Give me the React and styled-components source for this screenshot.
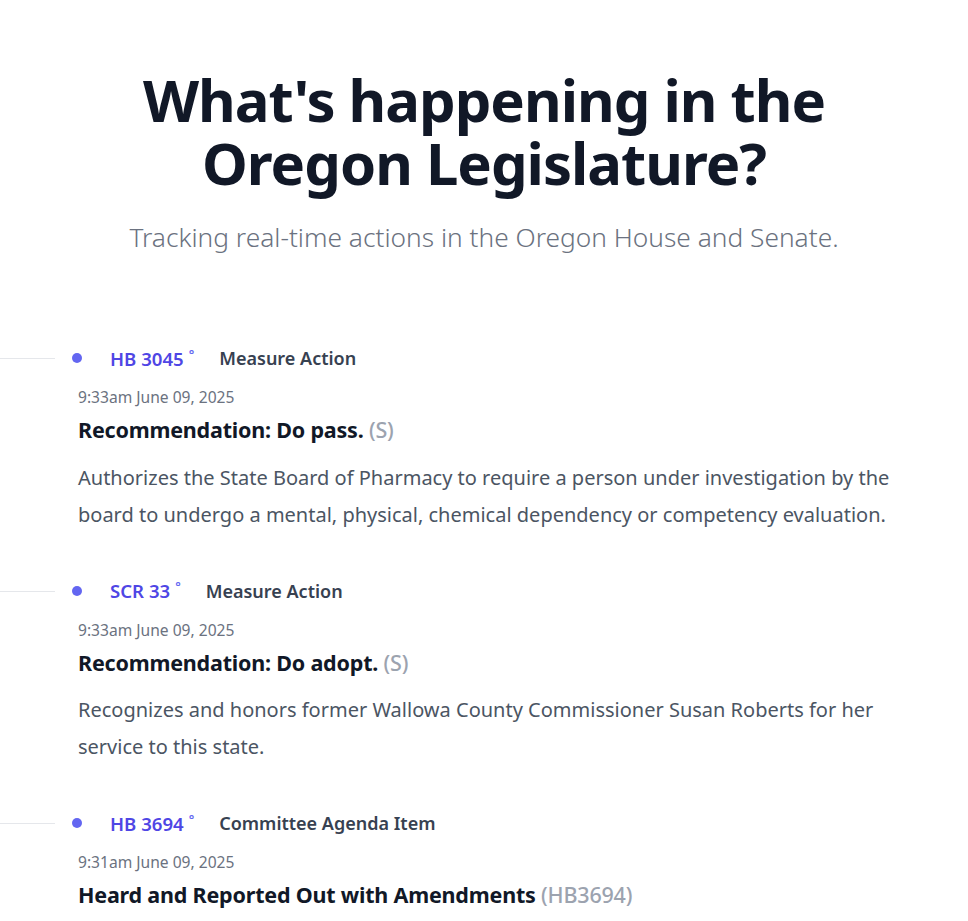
import React from "react";
import styled, { createGlobalStyle } from "styled-components";

const Global = createGlobalStyle`
  html, body { margin: 0; padding: 0; background: #ffffff; }
  body { font-family: "Noto Sans", "Open Sans", sans-serif; -webkit-font-smoothing: antialiased; }
  * { box-sizing: border-box; }
`;

const Page = styled.main`
  width: 968px;
  overflow: hidden;
`;

const Hero = styled.header`
  display: flex;
  flex-direction: column;
  align-items: center;
  padding-top: 68px;
  text-align: center;
`;

const Title = styled.h1`
  margin: 0;
  font-size: 58px;
  line-height: 63px;
  font-weight: 700;
  letter-spacing: -1px;
  color: #111827;
`;

const TitleLine = styled.span`
  display: block;
`;

const Subtitle = styled.p`
  margin: 26px 0 0;
  font-size: 26.3px;
  line-height: 34px;
  font-weight: 300;
  color: #6b7280;
`;

const Feed = styled.ol`
  list-style: none;
  margin: 88px 0 0;
  padding: 0 48px 0 0;
  display: flex;
  flex-direction: column;
  gap: 42px;
`;

const Item = styled.li`
  position: relative;
  padding-left: 78px;
  &::before {
    content: "";
    position: absolute;
    left: 0;
    top: 16px;
    width: 55px;
    height: 1px;
    background: #e5e7eb;
  }
  &::after {
    content: "";
    position: absolute;
    left: 72px;
    top: 11px;
    width: 10px;
    height: 10px;
    border-radius: 50%;
    background: #6366f1;
  }
`;

const Body = styled.div`
  display: flex;
  flex-direction: column;
`;

const Meta = styled.div`
  display: flex;
  align-items: center;
  gap: 25px;
  height: 32px;
  padding-left: 32px;
`;

const Measure = styled.a`
  font-size: 18.6px;
  font-weight: 600;
  color: #4f46e5;
  text-decoration: none;
  sup { font-size: 13px; margin-left: 5px; color: #6366f1; }
`;

const Kind = styled.span`
  font-size: 18px;
  font-weight: 600;
  color: #374151;
`;

const Time = styled.time`
  margin-top: 12px;
  font-size: 15.6px;
  line-height: 22px;
  color: #6b7280;
`;

const Action = styled.h2`
  margin: 7px 0 0;
  font-size: 21.5px;
  line-height: 30px;
  font-weight: 700;
  color: #111827;
  letter-spacing: -0.2px;
  span { color: #9ca3af; font-weight: 500; }
`;

const Summary = styled.p`
  margin: 13.5px 0 0;
  font-size: 20px;
  line-height: 37px;
  color: #4b5563;
`;

const items = [
  {
    id: "HB 3045",
    kind: "Measure Action",
    time: "9:33am June 09, 2025",
    action: "Recommendation: Do pass.",
    tag: "(S)",
    summary:
      "Authorizes the State Board of Pharmacy to require a person under investigation by the board to undergo a mental, physical, chemical dependency or competency evaluation.",
  },
  {
    id: "SCR 33",
    kind: "Measure Action",
    time: "9:33am June 09, 2025",
    action: "Recommendation: Do adopt.",
    tag: "(S)",
    summary:
      "Recognizes and honors former Wallowa County Commissioner Susan Roberts for her service to this state.",
  },
  {
    id: "HB 3694",
    kind: "Committee Agenda Item",
    time: "9:31am June 09, 2025",
    action: "Heard and Reported Out with Amendments",
    tag: "(HB3694)",
    summary: "",
  },
];

export default function App() {
  return (
    <Page>
      <Global />
      <Hero>
        <Title>
          <TitleLine>What's happening in the</TitleLine>
          <TitleLine>Oregon Legislature?</TitleLine>
        </Title>
        <Subtitle>Tracking real-time actions in the Oregon House and Senate.</Subtitle>
      </Hero>
      <Feed>
        {items.map((it) => (
          <Item key={it.id}>
            <Body>
              <Meta>
                <Measure href="#">
                  {it.id}
                  <sup>°</sup>
                </Measure>
                <Kind>{it.kind}</Kind>
              </Meta>
              <Time>{it.time}</Time>
              <Action>
                {it.action} <span>{it.tag}</span>
              </Action>
              {it.summary && <Summary>{it.summary}</Summary>}
            </Body>
          </Item>
        ))}
      </Feed>
    </Page>
  );
}
